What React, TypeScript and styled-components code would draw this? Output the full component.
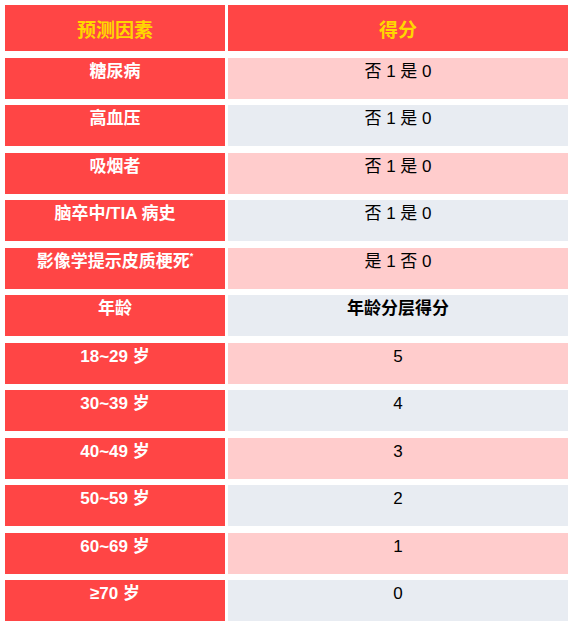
import styled, { createGlobalStyle } from 'styled-components'

// 预测评分表
const rows: { factor: string; score: string; sup?: boolean; strong?: boolean }[] = [
  { factor: '糖尿病', score: '否 1 是 0' },
  { factor: '高血压', score: '否 1 是 0' },
  { factor: '吸烟者', score: '否 1 是 0' },
  { factor: '脑卒中/TIA 病史', score: '否 1 是 0' },
  { factor: '影像学提示皮质梗死', score: '是 1 否 0', sup: true },
  { factor: '年龄', score: '年龄分层得分', strong: true },
  { factor: '18~29 岁', score: '5' },
  { factor: '30~39 岁', score: '4' },
  { factor: '40~49 岁', score: '3' },
  { factor: '50~59 岁', score: '2' },
  { factor: '60~69 岁', score: '1' },
  { factor: '≥70 岁', score: '0' },
]

export default function App() {
  return (
    <>
      <GlobalStyle />
      <Table>
        <HeadCell>预测因素</HeadCell>
        <HeadCell>得分</HeadCell>
        {rows.map((r, i) => (
          <Row key={r.factor}>
            <FactorCell>
              {r.factor}
              {r.sup && <Sup>*</Sup>}
            </FactorCell>
            <ScoreCell pink={i % 2 === 0} strong={r.strong}>
              {r.score}
            </ScoreCell>
          </Row>
        ))}
      </Table>
    </>
  )
}

const GlobalStyle = createGlobalStyle`
  body {
    margin: 0;
    background: #fff;
    font-family: 'Liberation Sans', 'Noto Sans CJK SC', sans-serif;
  }
`

const Table = styled.div`
  display: grid;
  grid-template-columns: 220px 340px;
  grid-auto-rows: 41px;
  grid-template-rows: 46px;
  column-gap: 3px;
  row-gap: 6.5px;
  padding: 5px 0 0 5px;
`

const Row = styled.div`
  display: contents;
`

const HeadCell = styled.div`
  background: #ff4545;
  color: #ffd700;
  font-size: 19px;
  font-weight: bold;
  display: flex;
  align-items: center;
  justify-content: center;
`

const FactorCell = styled.div`
  background: #ff4545;
  color: #fff;
  font-size: 17px;
  font-weight: bold;
  text-align: center;
  padding-top: 3px;
  line-height: 22px;
`

const ScoreCell = styled.div<{ pink: boolean; strong?: boolean }>`
  background: ${(p) => (p.pink ? '#ffcccc' : '#e8ecf2')};
  color: #000;
  font-size: 17px;
  font-weight: ${(p) => (p.strong ? 'bold' : 'normal')};
  text-align: center;
  padding-top: 3px;
  line-height: 22px;
`

const Sup = styled.sup`
  font-size: 9px;
  vertical-align: top;
  line-height: 10px;
`
